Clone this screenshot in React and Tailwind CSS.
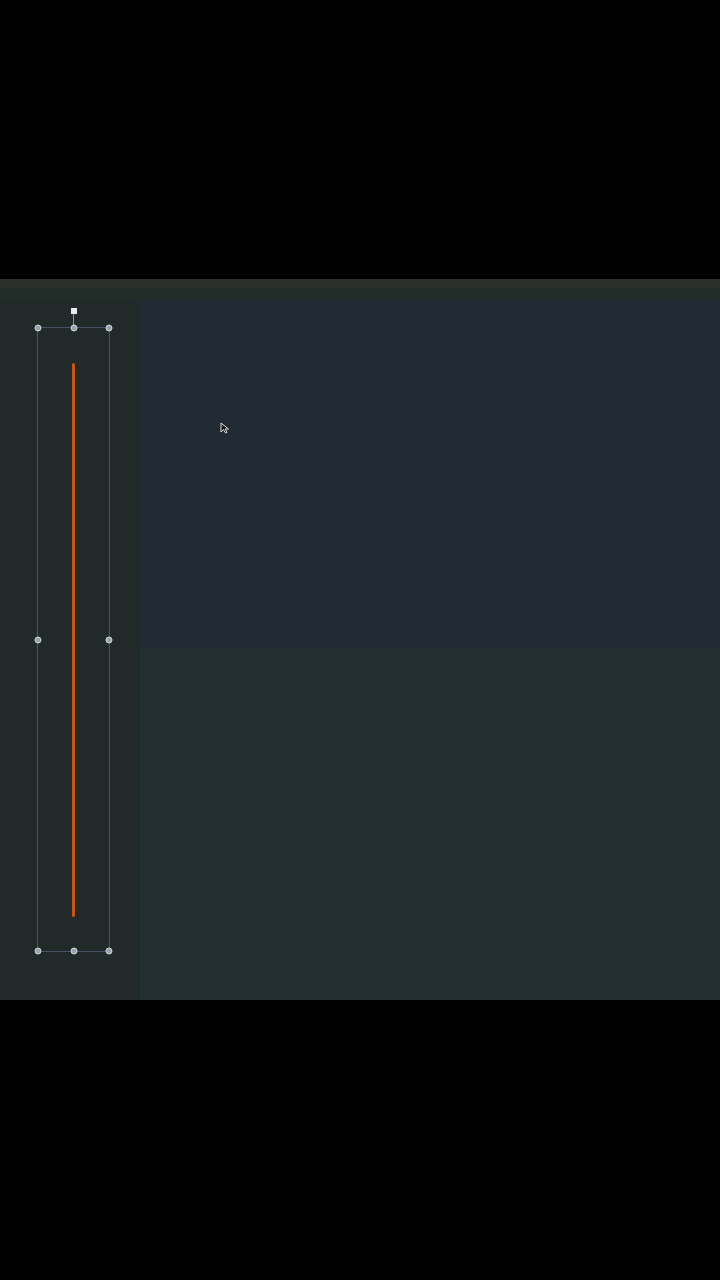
import React from 'react';

const Handle = ({ className }) => (
  <div className={`absolute w-[7px] h-[7px] rounded-full bg-[#9aa3ad] border border-[#cfd6dc] -translate-x-1/2 -translate-y-1/2 ${className}`} />
);

const App = () => {
  return (
    <div className="w-[720px] h-[1280px] bg-black flex flex-col">
      <div className="h-[279px] shrink-0" />

      {/* editor canvas */}
      <div className="h-[721px] shrink-0 flex flex-col bg-[#222b33]">
        <div className="h-[9px] bg-[#2c2f2a]" />
        <div className="h-[12px] bg-[#222d29]" />
        <div className="flex-1 flex">
          <div className="w-[140px] shrink-0 bg-[#212a29] relative">
            {/* selected line */}
            <div className="absolute left-[37px] top-[27px] w-[73px] h-[625px] border border-[#465266]">
              <div className="absolute left-[34px] top-[35px] w-[3px] h-[554px] bg-[#c9521b] rounded-full" />
              <div className="absolute left-[35px] -top-[17px] w-px h-[17px] bg-[#8a939c]" />
              <div className="absolute left-[35.5px] -top-[17px] w-[6px] h-[6px] bg-[#e8ecef] -translate-x-1/2 -translate-y-1/2" />
              <Handle className="left-0 top-0" />
              <Handle className="left-1/2 top-0" />
              <Handle className="left-full top-0" />
              <Handle className="left-0 top-1/2" />
              <Handle className="left-full top-1/2" />
              <Handle className="left-0 top-full" />
              <Handle className="left-1/2 top-full" />
              <Handle className="left-full top-full" />
            </div>
          </div>
          <div className="flex-1 flex flex-col">
            <div className="h-[348px] bg-[#222b33] relative">
              <svg className="absolute left-[80px] top-[122px]" width="10" height="12" viewBox="0 0 10 12">
                <path d="M1 1 L1 10 L3.5 7.5 L5.5 11 L7 10.3 L5 7 L8.5 7 Z" fill="#111" stroke="#ddd" strokeWidth="1" />
              </svg>
            </div>
            <div className="flex-1 bg-[#223031]" />
          </div>
        </div>
      </div>

      <div className="flex-1" />
    </div>
  );
};

export default App;
